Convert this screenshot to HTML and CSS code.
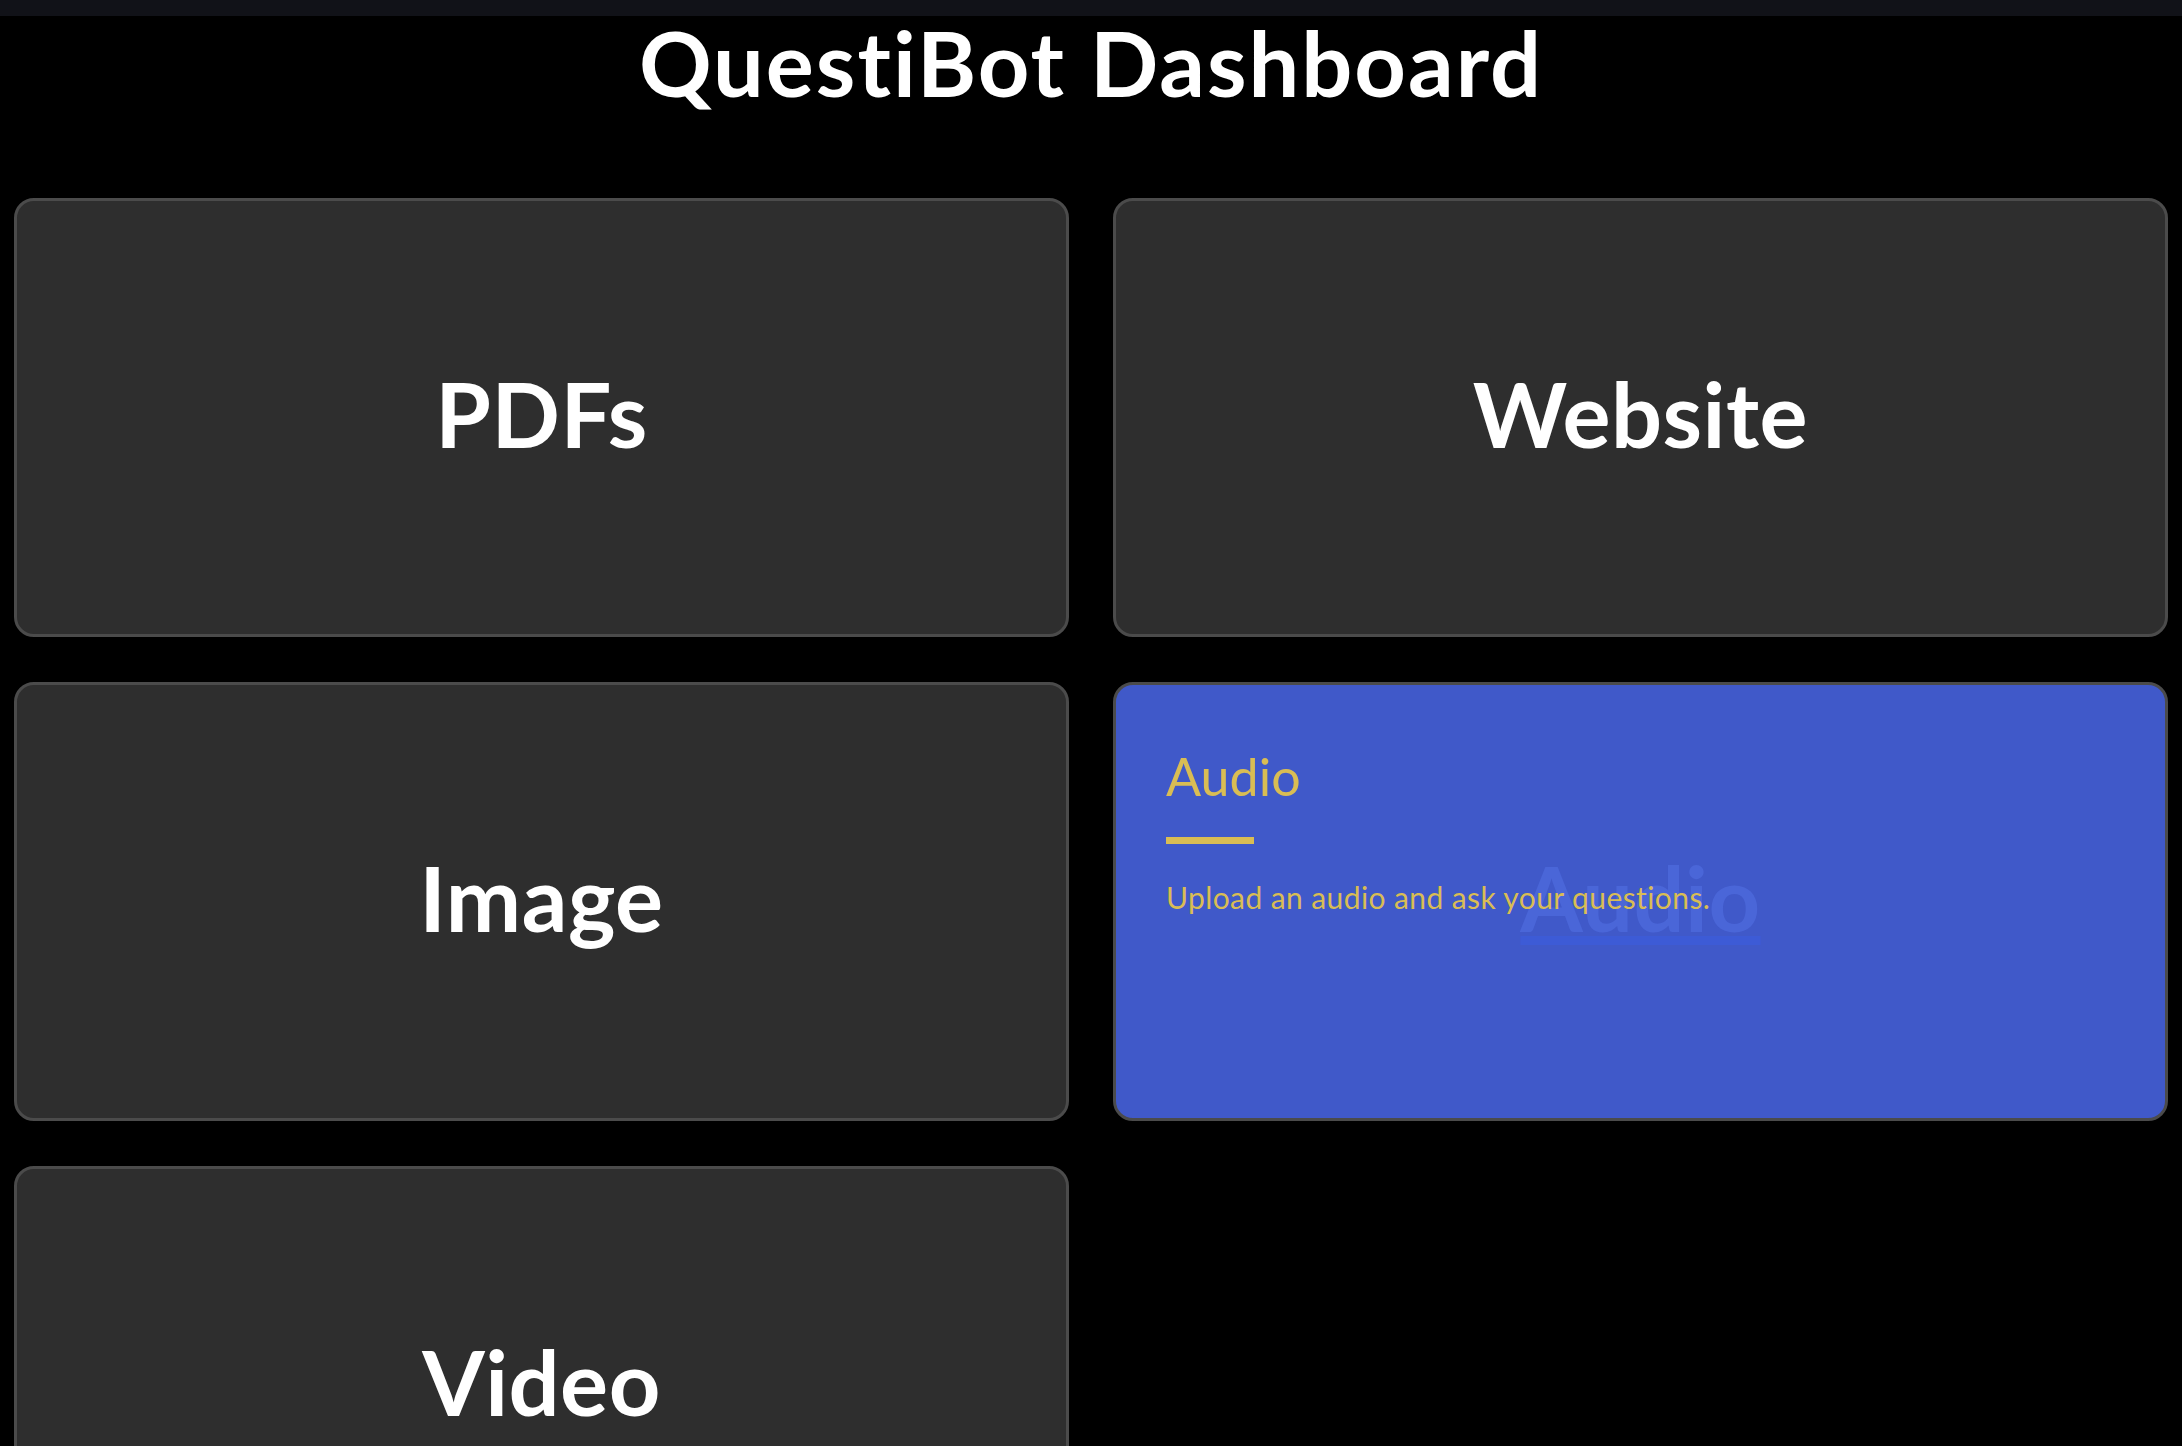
FILE: index.html
```html
<!DOCTYPE html>
<html lang="en">
<head>
<meta charset="utf-8">
<title>QuestiBot Dashboard</title>
<link rel="stylesheet" href="styles.css">
</head>
<body>
<div class="topbar"></div>
<main class="page">
  <h1 class="title">QuestiBot Dashboard</h1>
  <section class="grid">
    <div class="card"><span class="label">PDFs</span></div>
    <div class="card"><span class="label">Website</span></div>
    <div class="card"><span class="label">Image</span></div>
    <div class="card card-active">
      <span class="label label-faded">Audio</span>
      <div class="overlay">
        <h2 class="overlay-title">Audio</h2>
        <div class="overlay-bar"></div>
        <p class="overlay-text">Upload an audio and ask your questions.</p>
      </div>
    </div>
    <div class="card"><span class="label">Video</span></div>
  </section>
</main>
</body>
</html>
```
FILE: styles.css
```css
html, body {
  margin: 0;
  padding: 0;
  background: #000000;
}

body {
  font-family: "Lato", "Noto Sans", sans-serif;
  color: #ffffff;
}

.topbar {
  height: 16px;
  background: #111218;
}

.page {
  padding: 0 14px;
}

.title {
  margin: 0;
  padding: 0;
  height: 182px;
  box-sizing: border-box;
  text-align: center;
  font-size: 90px;
  font-weight: 700;
  line-height: 92px;
  letter-spacing: 2px;
}

.grid {
  display: grid;
  grid-template-columns: 1fr 1fr;
  column-gap: 44px;
  row-gap: 45px;
}

.card {
  position: relative;
  height: 439px;
  box-sizing: border-box;
  padding-bottom: 10px;
  border: 3px solid #4b4b4b;
  border-radius: 20px;
  background: #2e2e2e;
  display: flex;
  align-items: center;
  justify-content: center;
  overflow: hidden;
}

.label {
  font-size: 90px;
  font-weight: 700;
  color: #ffffff;
  line-height: 1;
  letter-spacing: 0.5px;
}

.card-active {
  background: #4059c9;
}

.label-faded {
  color: #4a66d8;
  text-decoration: underline;
  text-decoration-color: #3d5bd6;
  text-decoration-thickness: 9px;
  text-underline-offset: 4px;
  text-decoration-skip-ink: none;
}

.overlay {
  position: absolute;
  inset: 0;
  padding: 50px 50px;
  color: #d9bd54;
}

.overlay-title {
  margin: 0;
  padding-top: 6px;
  font-size: 52px;
  font-weight: 400;
  line-height: 70px;
}

.overlay-bar {
  width: 88px;
  height: 7px;
  background: #d9bd54;
  margin-top: 26px;
}

.overlay-text {
  margin: 35px 0 0;
  font-size: 30px;
  line-height: 36px;
  letter-spacing: 0.4px;
}
```
